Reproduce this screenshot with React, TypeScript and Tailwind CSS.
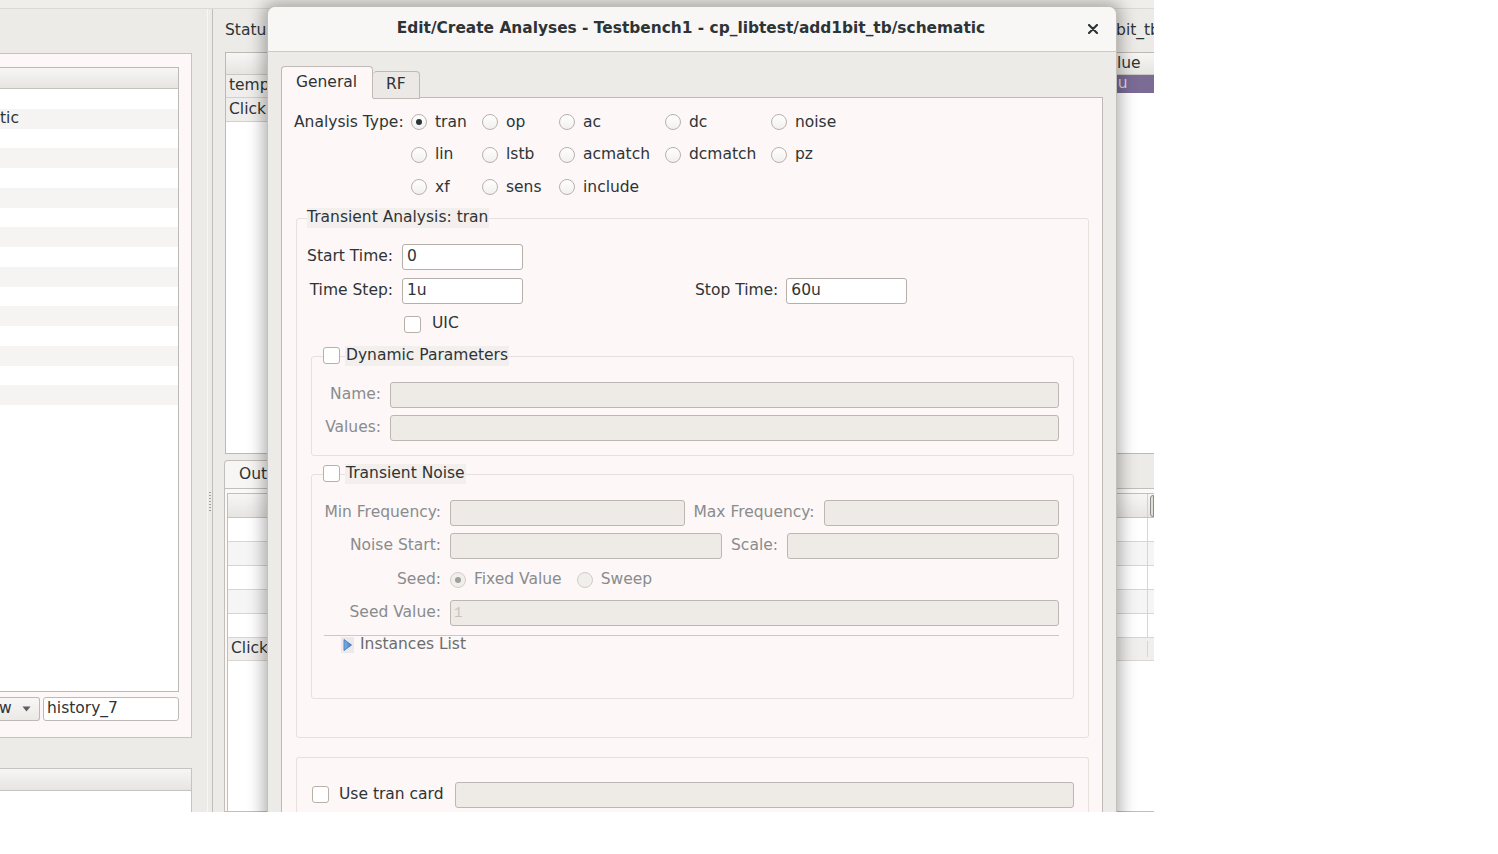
import React from "react";

function Radio({ checked = false, disabled = false }: { checked?: boolean; disabled?: boolean }) {
  return (
    <span
      className={
        disabled
          ? "flex items-center justify-center w-[16px] h-[16px] rounded-full border border-[#d2cdc8] bg-[#f1efec] shrink-0"
          : "flex items-center justify-center w-[16px] h-[16px] rounded-full border border-[#b8b2ac] bg-gradient-to-b from-[#ffffff] to-[#f2f0ee] shrink-0"
      }
    >
      {checked && (
        <span className={disabled ? "w-[6px] h-[6px] rounded-full bg-[#a29e9a]" : "w-[6px] h-[6px] rounded-full bg-[#2e3436]"} />
      )}
    </span>
  );
}

function RadioItem({ label, checked = false }: { label: string; checked?: boolean }) {
  return (
    <div className="flex items-center whitespace-nowrap">
      <Radio checked={checked} />
      <span className="ml-[8px]">{label}</span>
    </div>
  );
}

function Check() {
  return <span className="block w-[17px] h-[17px] shrink-0 rounded-[3px] border border-[#b7b1aa] bg-white" />;
}

function Input({ value, className }: { value?: string; className: string }) {
  return (
    <div className={"h-[26px] shrink-0 bg-white border border-[#b4afa9] rounded-[3px] pl-[4px] flex items-center " + className}>
      {value}
    </div>
  );
}

function DInput({ className, placeholder }: { className: string; placeholder?: string }) {
  return (
    <div className={"h-[26px] bg-[#eeebe7] border border-[#bcb7b2] rounded-[3px] pl-[3px] flex items-center text-[#c6c2be] font-['Liberation_Mono',monospace] text-[14px] " + className}>
      {placeholder}
    </div>
  );
}

function LeftPanel() {
  const rows = Array.from({ length: 16 }, (_, i) => i);
  return (
    <div className="w-[192px] shrink-0 flex flex-col">
      <div className="h-[44px] shrink-0" />
      <div className="h-[685px] shrink-0 bg-[#fdf7f7] border border-l-0 border-[#c7c3be] flex flex-col pt-[13px] pr-[12px] pb-[16px]">
        <div className="flex-1 bg-white border border-l-0 border-[#bdb9b4] flex flex-col overflow-hidden">
          <div className="h-[21px] shrink-0 bg-gradient-to-b from-[#f7f6f5] to-[#e7e5e2] border-b border-[#c6c2bd]" />
          {rows.map((i) => (
            <div
              key={i}
              className={i % 2 === 1 ? "h-[19.75px] shrink-0 bg-[#f5f4f3] flex items-center" : "h-[19.75px] shrink-0 bg-white flex items-center"}
            >
              {i === 1 ? "tic" : ""}
            </div>
          ))}
        </div>
        <div className="flex mt-[5px] h-[24px] shrink-0">
          <div className="w-[40px] border border-l-0 border-[#bdb9b4] rounded-r-[3px] bg-gradient-to-b from-[#f8f7f6] to-[#ebe9e6] flex items-center justify-between pr-[8px]">
            <span className="-ml-[1px]">w</span>
            <svg width="9" height="6" viewBox="0 0 9 6">
              <path d="M0.5 0.5 L8.5 0.5 L4.5 5.5 Z" fill="#5b5f60" />
            </svg>
          </div>
          <div className="ml-[3px] flex-1 bg-white border border-[#bdb9b4] rounded-[3px] pl-[3px] flex items-center">history_7</div>
        </div>
      </div>
      <div className="h-[30px] shrink-0" />
      <div className="flex-1 border-t border-r border-[#c7c3be] bg-white flex flex-col">
        <div className="h-[22px] bg-gradient-to-b from-[#f7f6f5] to-[#e7e5e2] border-b border-[#c6c2bd]" />
      </div>
    </div>
  );
}

function Divider() {
  return (
    <div className="w-[20px] shrink-0 flex">
      <div className="w-[15px]" />
      <div className="w-px bg-[#f8f7f6]" />
      <div className="flex-1 flex justify-center">
        <div className="mt-[483px] w-[2px] h-[21px] bg-[repeating-linear-gradient(to_bottom,#a19d98_0px,#a19d98_1px,transparent_1px,transparent_3px)]" />
      </div>
    </div>
  );
}

function RightPane() {
  const outRows = [0, 1, 2, 3, 4];
  return (
    <div className="w-[960px] shrink-0 border-l border-[#c2beb9] flex flex-col pl-[12px]">
      <div className="h-[43px] shrink-0 flex items-center whitespace-nowrap">
        <div className="w-[852px] shrink-0">Status</div>
        <div>add1bit_tb</div>
      </div>
      <div className="h-[402px] shrink-0 border border-[#bdb9b4] bg-white flex">
        <div className="w-[500px] shrink-0 flex flex-col">
          <div className="h-[22px] bg-gradient-to-b from-[#f7f6f5] to-[#e7e5e2] border-b border-[#cbc7c2]" />
          <div className="h-[23px] bg-[#f0eeec] border-b border-[#d3cfca] pl-[3px] flex items-center">temp</div>
          <div className="h-[24px] bg-[#f0eeec] border-b border-[#d3cfca] pl-[3px] flex items-center">Click to add</div>
        </div>
        <div className="flex-1 flex flex-col">
          <div className="h-[22px] bg-gradient-to-b from-[#f7f6f5] to-[#e7e5e2] border-b border-[#cbc7c2] flex items-center">
            <div className="w-[368px] shrink-0" />
            <span className="pl-[4px]">Value</span>
          </div>
          <div className="h-[18px] bg-[#7a6c95] text-[#ddd6e9] flex items-center">
            <div className="w-[378px] shrink-0" />
            <span className="pl-[4px]">1u</span>
          </div>
        </div>
      </div>
      <div className="h-[6px] shrink-0" />
      <div className="h-[28px] shrink-0 flex items-end">
        <div className="w-[70px] h-[28px] -ml-[1px] rounded-t-[4px] border border-b-0 border-[#c2beb9] bg-[#f7f6f5] pl-[14px] flex items-center">
          Out
        </div>
      </div>
      <div className="flex-1 -ml-[1px] border border-[#c2beb9] bg-[#fbf8f7] pl-[2px] pt-[4px] flex flex-col">
        <div className="flex-1 border-l border-t border-[#c2beb9] bg-white flex flex-col">
          <div className="h-[24px] shrink-0 bg-gradient-to-b from-[#f7f6f5] to-[#e7e5e2] border-b border-[#c6c2bd] flex">
            <div className="w-[920px] shrink-0 border-r border-[#d3cfca]" />
            <div className="w-[4px] h-[22px] mt-[1px] ml-[2px] rounded-l-[3px] border border-[#8d8984] bg-[#e2dfdb]" />
          </div>
          {outRows.map((i) => (
            <div
              key={i}
              className={i % 2 === 1 ? "h-[24px] shrink-0 bg-[#f6f5f5] border-b border-[#d9d5d0] flex" : "h-[24px] shrink-0 bg-white border-b border-[#d9d5d0] flex"}
            >
              <div className="w-[920px] shrink-0 border-r border-[#d9d5d0]" />
            </div>
          ))}
          <div className="h-[23px] shrink-0 bg-[#f1efed] border-b border-[#d9d5d0] flex items-center">
            <div className="w-[920px] shrink-0 border-r border-[#d9d5d0] pl-[3px]">Click to add</div>
          </div>
        </div>
      </div>
    </div>
  );
}

function Dialog() {
  const gray = "text-[#898c8d]";
  return (
    <div className="absolute left-[267px] top-[6px] w-[850px] h-[830px] rounded-t-[8px] border border-[#c3beb8] bg-[#edebe7] shadow-[0_0_16px_4px_rgba(0,0,0,0.3)] flex flex-col">
      <div className="relative h-[45px] shrink-0 rounded-t-[8px] bg-[#f8f7f6] border-b border-[#cdc8c3] flex items-center justify-center text-[15px]">
        <span className="font-bold text-[15.4px] pr-[2px] whitespace-nowrap">Edit/Create Analyses - Testbench1 - cp_libtest/add1bit_tb/schematic</span>
        <svg className="absolute right-[18px] top-[17px]" width="10" height="10" viewBox="0 0 10 10">
          <path d="M1 1 L9 9 M9 1 L1 9" stroke="#2e3436" strokeWidth="2.2" strokeLinecap="round" />
        </svg>
      </div>
      <div className="flex-1 flex flex-col px-[13px] pt-[15px] whitespace-nowrap">
        <div className="flex items-end h-[31px] shrink-0 relative z-10 -mb-px">
          <div className="w-[92px] h-[32px] rounded-t-[4px] border border-b-0 border-[#bfbab5] bg-[#fdf7f7] flex items-center pl-[14px]">
            General
          </div>
          <div className="w-[47px] h-[28px] -mb-px rounded-t-[4px] border border-l-0 border-[#bfbab5] bg-[#ebe8e5] flex items-center pl-[13px]">
            RF
          </div>
        </div>
        <div className="flex-1 border border-[#bfbab5] bg-[#fdf7f7] flex flex-col">
          <div className="grid grid-cols-[117px_71px_77px_106px_106px_1fr] auto-rows-[32.5px] items-center pt-[8px] pl-[12px]">
            <span>Analysis Type:</span>
            <RadioItem label="tran" checked />
            <RadioItem label="op" />
            <RadioItem label="ac" />
            <RadioItem label="dc" />
            <RadioItem label="noise" />
            <span />
            <RadioItem label="lin" />
            <RadioItem label="lstb" />
            <RadioItem label="acmatch" />
            <RadioItem label="dcmatch" />
            <RadioItem label="pz" />
            <span />
            <RadioItem label="xf" />
            <RadioItem label="sens" />
            <RadioItem label="include" />
          </div>

          <div className="relative mt-[14px] ml-[14px] mr-[13px] border border-[#e7e0dd] rounded-[3px] pt-[25px] pb-[38px]">
            <div className="absolute left-[10px] -top-[11px] h-[20px] pr-[1px] bg-[#f3efed] flex items-center">
              Transient Analysis: tran
            </div>
            <div className="flex items-center h-[26px] pl-[8px]">
              <span className="w-[88px] shrink-0 text-right">Start Time:</span>
              <Input className="ml-[9px] w-[121px]" value="0" />
            </div>
            <div className="flex items-center h-[26px] pl-[8px] mt-[8px]">
              <span className="w-[88px] shrink-0 text-right">Time Step:</span>
              <Input className="ml-[9px] w-[121px]" value="1u" />
              <span className="ml-[172px]">Stop Time:</span>
              <Input className="ml-[8px] w-[121px]" value="60u" />
            </div>
            <div className="flex items-center h-[17px] mt-[12px] pl-[107px]">
              <Check />
              <span className="ml-[11px]">UIC</span>
            </div>

            <div className="relative mt-[23px] ml-[14px] mr-[14px] border border-[#e7e0dd] rounded-[3px] pt-[25px] pb-[14px]">
              <div className="absolute left-[11px] -top-[11px] h-[20px] flex items-center">
                <Check />
                <span className="ml-[5px] h-[20px] pl-[1px] pr-[1px] bg-[#f3efed] flex items-center">Dynamic Parameters</span>
              </div>
              <div className="flex items-center h-[26px] pl-[10px] pr-[14px]">
                <span className={"w-[59px] shrink-0 text-right " + gray}>Name:</span>
                <DInput className="ml-[9px] flex-1" />
              </div>
              <div className="flex items-center h-[26px] pl-[10px] pr-[14px] mt-[7px]">
                <span className={"w-[59px] shrink-0 text-right " + gray}>Values:</span>
                <DInput className="ml-[9px] flex-1" />
              </div>
            </div>

            <div className="relative mt-[18px] ml-[14px] mr-[14px] border border-[#e7e0dd] rounded-[3px] pt-[25px] pb-[45px]">
              <div className="absolute left-[11px] -top-[11px] h-[20px] flex items-center">
                <Check />
                <span className="ml-[5px] h-[20px] pl-[1px] pr-[1px] bg-[#f3efed] flex items-center">Transient Noise</span>
              </div>
              <div className="flex items-center h-[26px] pl-[10px] pr-[14px]">
                <span className={"w-[119px] shrink-0 text-right " + gray}>Min Frequency:</span>
                <DInput className="ml-[9px] flex-1" />
                <span className={"ml-[8px] " + gray}>Max Frequency:</span>
                <DInput className="ml-[9px] flex-1" />
              </div>
              <div className="flex items-center h-[26px] pl-[10px] pr-[14px] mt-[7px]">
                <span className={"w-[119px] shrink-0 text-right " + gray}>Noise Start:</span>
                <DInput className="ml-[9px] flex-1" />
                <span className={"ml-[9px] " + gray}>Scale:</span>
                <DInput className="ml-[9px] flex-1" />
              </div>
              <div className="flex items-center h-[26px] pl-[10px] pr-[14px] mt-[8px]">
                <span className={"w-[119px] shrink-0 text-right " + gray}>Seed:</span>
                <span className="ml-[9px]">
                  <Radio checked disabled />
                </span>
                <span className={"ml-[8px] " + gray}>Fixed Value</span>
                <span className="ml-[15px]">
                  <Radio disabled />
                </span>
                <span className={"ml-[8px] " + gray}>Sweep</span>
              </div>
              <div className="flex items-center h-[26px] pl-[10px] pr-[14px] mt-[7px]">
                <span className={"w-[119px] shrink-0 text-right " + gray}>Seed Value:</span>
                <DInput className="ml-[9px] flex-1" placeholder="1" />
              </div>
              <div className="ml-[12px] mr-[14px] h-px bg-[#cdc8c3] mt-[9px]" />
              <div className="flex items-center h-[16px] mt-[1px] pl-[29px]">
                <svg width="13" height="16" viewBox="0 0 13 16">
                  <rect x="0" y="0" width="13" height="16" fill="#ebe9ec" />
                  <defs>
                    <linearGradient id="tri" x1="0" y1="0" x2="1" y2="0">
                      <stop offset="0" stopColor="#7fb0e6" />
                      <stop offset="1" stopColor="#3f7fcf" />
                    </linearGradient>
                  </defs>
                  <path d="M3 2.5 L10.5 8 L3 13.5 Z" fill="url(#tri)" stroke="#3a6fb5" strokeWidth="0.8" />
                </svg>
                <span className="ml-[6px] text-[#6a6d6e]">Instances List</span>
              </div>
            </div>
          </div>

          <div className="mt-[19px] ml-[14px] mr-[13px] border border-b-0 border-[#e7e0dd] rounded-t-[3px] pt-[24px] pl-[15px] pr-[14px] h-[80px]">
            <div className="flex items-center h-[26px]">
              <Check />
              <span className="ml-[10px]">Use tran card</span>
              <DInput className="ml-[11px] flex-1" />
            </div>
          </div>
        </div>
      </div>
    </div>
  );
}

export default function App() {
  return (
    <div className="w-[1498px] h-[854px] bg-white overflow-hidden font-['DejaVu_Sans',sans-serif] text-[15.5px] text-[#2e3436] leading-none">
      <div className="relative w-[1154px] h-[812px] bg-[#edebe7] overflow-hidden flex flex-col">
        <div className="h-[9px] shrink-0 border-b border-[#dcd8d3] bg-[#f0eeeb]" />
        <div className="flex-1 flex">
          <LeftPanel />
          <Divider />
          <RightPane />
        </div>
        <Dialog />
      </div>
    </div>
  );
}
